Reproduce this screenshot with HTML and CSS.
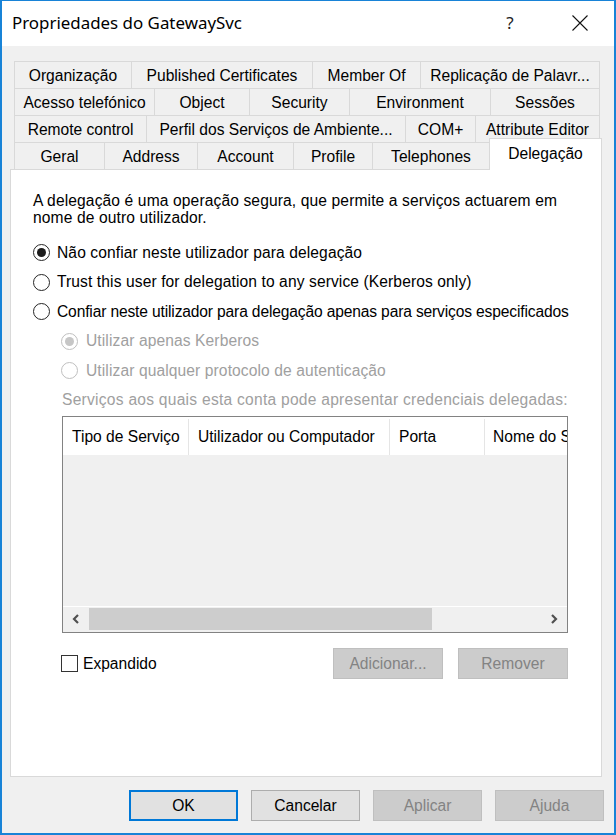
FILE: index.html
```html
<!DOCTYPE html>
<html lang="pt">
<head>
<meta charset="utf-8">
<title>Propriedades do GatewaySvc</title>
<link rel="stylesheet" href="styles.css">
</head>
<body>
<div class="window">
  <div class="titlebar">
    <span class="title">Propriedades do GatewaySvc</span>
    <span class="help">?</span>
    <span class="close">
      <svg width="16" height="16" viewBox="0 0 16 16"><path d="M0.5 0.5 L15.5 15.5 M15.5 0.5 L0.5 15.5" stroke="#111" stroke-width="1.1" fill="none"/></svg>
    </span>
  </div>

  <div class="tabs">
    <div class="tabrow r1">
      <div class="tab">Organização</div>
      <div class="tab">Published Certificates</div>
      <div class="tab">Member Of</div>
      <div class="tab">Replicação de Palavr...</div>
    </div>
    <div class="tabrow r2">
      <div class="tab">Acesso telefónico</div>
      <div class="tab">Object</div>
      <div class="tab">Security</div>
      <div class="tab">Environment</div>
      <div class="tab">Sessões</div>
    </div>
    <div class="tabrow r3">
      <div class="tab">Remote control</div>
      <div class="tab">Perfil dos Serviços de Ambiente...</div>
      <div class="tab">COM+</div>
      <div class="tab">Attribute Editor</div>
    </div>
    <div class="tabrow r4">
      <div class="tab">Geral</div>
      <div class="tab">Address</div>
      <div class="tab">Account</div>
      <div class="tab">Profile</div>
      <div class="tab">Telephones</div>
      <div class="tab sel">Delegação</div>
    </div>
  </div>

  <div class="panel">
    <p class="desc">A delegação é uma operação segura, que permite a serviços actuarem em<br>nome de outro utilizador.</p>
    <div class="options">
      <div class="opt"><span class="radio on"></span><span>Não confiar neste utilizador para delegação</span></div>
      <div class="opt"><span class="radio"></span><span>Trust this user for delegation to any service (Kerberos only)</span></div>
      <div class="opt"><span class="radio"></span><span class="tight">Confiar neste utilizador para delegação apenas para serviços especificados</span></div>
      <div class="opt sub dis"><span class="radio on"></span><span>Utilizar apenas Kerberos</span></div>
      <div class="opt sub dis"><span class="radio"></span><span>Utilizar qualquer protocolo de autenticação</span></div>
      <div class="opt lbl dis"><span>Serviços aos quais esta conta pode apresentar credenciais delegadas:</span></div>
    </div>

    <div class="listview">
      <div class="lvhead">
        <div class="col c1">Tipo de Serviço</div>
        <div class="col c2">Utilizador ou Computador</div>
        <div class="col c3">Porta</div>
        <div class="col c4">Nome do Serviço</div>
      </div>
      <div class="lvbody"></div>
      <div class="hscroll">
        <span class="sbtn">
          <svg width="8" height="10" viewBox="0 0 8 10"><path d="M6 1 L2 5 L6 9" stroke="#505050" stroke-width="2.2" fill="none"/></svg>
        </span>
        <span class="thumb"></span>
        <span class="track"></span>
        <span class="sbtn">
          <svg width="8" height="10" viewBox="0 0 8 10"><path d="M2 1 L6 5 L2 9" stroke="#505050" stroke-width="2.2" fill="none"/></svg>
        </span>
      </div>
    </div>

    <div class="actions">
      <label class="check"><span class="box"></span><span>Expandido</span></label>
      <div class="btns">
        <span class="btn disabled">Adicionar...</span>
        <span class="btn disabled">Remover</span>
      </div>
    </div>
  </div>

  <div class="footer">
    <span class="btn default">OK</span>
    <span class="btn">Cancelar</span>
    <span class="btn disabled">Aplicar</span>
    <span class="btn disabled">Ajuda</span>
  </div>
</div>
</body>
</html>
```

FILE: styles.css
```css
* { box-sizing: border-box; }
html, body { margin: 0; padding: 0; }
body {
  width: 616px;
  height: 835px;
  overflow: hidden;
  background: #1883d7;
  font-family: "Liberation Sans", Arial, sans-serif;
  font-size: 15.6px;
  color: #000;
}
.window {
  margin: 1px 2px 2px 2px;
  height: 832px;
  background: #f0f0f0;
  display: flex;
  flex-direction: column;
}
.titlebar {
  height: 45px;
  flex: none;
  background: #fff;
  display: flex;
  align-items: center;
  padding-left: 10px;
}
.title {
  flex: 1;
  font-family: "Noto Sans", "Open Sans", sans-serif;
  font-size: 16.9px;
  color: #000;
  padding-bottom: 2px;
}
.help {
  width: 40px;
  text-align: center;
  font-family: "Noto Sans", sans-serif;
  font-size: 17px;
  color: #222;
  margin-right: 16px;
  padding-bottom: 2px;
}
.close {
  width: 68px;
  display: flex;
  justify-content: center;
  padding-bottom: 2px;
}

/* tabs */
.tabs {
  margin: 15px 0 0 12px;
  width: 588px;
  flex: none;
}
.tabrow { display: grid; height: 27px; }
.r1 { grid-template-columns: 117px 181px 108px 180px; }
.r2 { grid-template-columns: 140px 95px 100px 141px 110px; }
.r3 { grid-template-columns: 132px 259px 70px 125px; }
.r4 { grid-template-columns: 90px 93px 96px 79px 117px 113px; }
.tab {
  border-top: 1px solid #d9d9d9;
  border-left: 1px solid #d9d9d9;
  display: flex;
  align-items: center;
  justify-content: center;
  white-space: nowrap;
  overflow: hidden;
  background: #f0f0f0;
  padding-top: 1px;
}
.tab:last-child { border-right: 1px solid #d9d9d9; }
.tab.sel {
  position: relative;
  z-index: 2;
  background: #fff;
  margin-top: -4px;
  height: 32px;
  padding: 0 0 1px;
}

/* panel */
.panel {
  margin-left: 8px;
  width: 592px;
  height: 608px;
  flex: none;
  background: #fff;
  border: 1px solid #d9d9d9;
  padding: 21px 0 0 22px;
}
.desc {
  margin: 0;
  line-height: 17px;
  padding-top: 1px;
  letter-spacing: 0.12px;
}
.options { margin-top: 12px; }
.opt {
  height: 29.5px;
  display: flex;
  align-items: center;
  gap: 7px;
  white-space: nowrap;
  letter-spacing: 0.1px;
}
.opt .tight { letter-spacing: -0.15px; }
.opt.sub { margin-left: 28px; gap: 8px; }
.opt.lbl { margin-left: 29px; letter-spacing: 0.25px; }
.dis { color: #a0a0a0; }
.radio {
  flex: none;
  width: 17px;
  height: 17px;
  border: 1px solid #262626;
  border-radius: 50%;
  background: #fff;
  display: flex;
  align-items: center;
  justify-content: center;
}
.radio.on::after {
  content: "";
  width: 9px;
  height: 9px;
  border-radius: 50%;
  background: #1c1c1c;
}
.dis .radio { border-color: #bfbfbf; }
.dis .radio.on::after { background: #c6c6c6; }

/* list view */
.listview {
  margin: 1px 0 0 29px;
  width: 506px;
  height: 217px;
  border: 1px solid #828282;
  display: flex;
  flex-direction: column;
  overflow: hidden;
}
.lvhead {
  height: 38px;
  flex: none;
  background: #fff;
  display: flex;
  white-space: nowrap;
  padding-top: 2px;
}
.col {
  flex: none;
  height: 100%;
  display: flex;
  align-items: center;
  padding-left: 9px;
  border-right: 1px solid #e5e5e5;
  overflow: hidden;
}
.c1 { width: 126px; }
.c2 { width: 201px; }
.c3 { width: 95px; }
.c4 { width: 120px; border-right: none; padding-left: 8px; }
.lvbody {
  flex: 1;
  background: #f0f0f0;
}
.hscroll {
  height: 26px;
  flex: none;
  display: flex;
  background: #f0f0f0;
  border-top: 1px solid #fff;
  padding: 1px 0 2px;
}
.sbtn {
  flex: none;
  width: 26px;
  display: flex;
  align-items: center;
  justify-content: center;
}
.thumb {
  flex: none;
  width: 343px;
  background: #cdcdcd;
}
.track { flex: 1; }

/* actions row */
.actions {
  margin: 15px 0 0 28px;
  width: 507px;
  height: 31px;
  display: flex;
  align-items: center;
  justify-content: space-between;
}
.check {
  display: flex;
  align-items: center;
  gap: 5px;
  padding-bottom: 0;
}
.box {
  width: 17px;
  height: 17px;
  border: 1px solid #333;
  background: #fff;
}
.btns { display: flex; gap: 15px; }

/* buttons */
.btn {
  width: 110px;
  height: 31px;
  display: flex;
  align-items: center;
  justify-content: center;
  background: #e1e1e1;
  border: 1px solid #adadad;
  color: #000;
}
.btn.disabled {
  background: #cccccc;
  border-color: #bfbfbf;
  color: #838383;
}
.btn.default {
  border: 2px solid #0078d7;
}
.footer {
  margin-top: 13px;
  display: flex;
  justify-content: flex-end;
  gap: 13px;
  padding-right: 10px;
}
.footer .btn { width: 109px; }
```
